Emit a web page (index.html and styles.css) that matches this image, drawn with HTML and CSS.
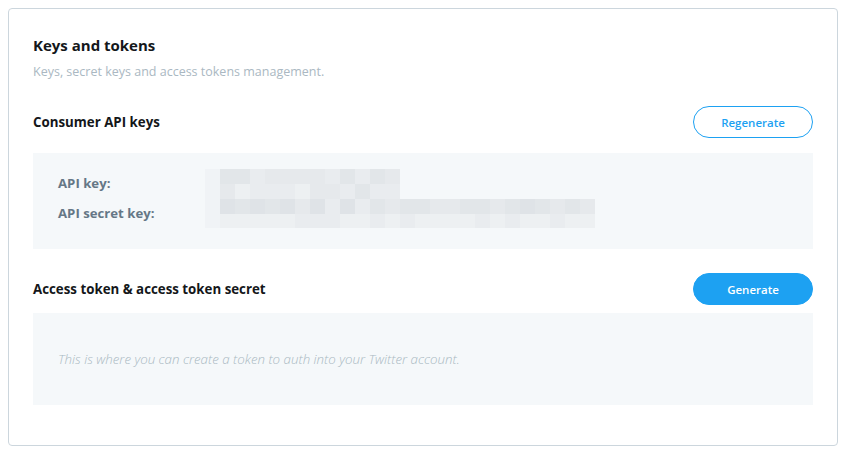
FILE: index.html
```html
<!DOCTYPE html>
<html lang="en">
<head>
<meta charset="utf-8">
<title>Keys and tokens</title>
<link rel="stylesheet" href="styles.css">
</head>
<body>
<div class="card">
  <h1 class="title">Keys and tokens</h1>
  <p class="subtitle">Keys, secret keys and access tokens management.</p>

  <div class="section-head">
    <h2 class="section-title">Consumer API keys</h2>
    <button class="btn btn-outline">Regenerate</button>
  </div>
  <div class="panel keys">
    <div class="key-label">API key:</div>
    <div class="blur">
      <div class="blur-row"><i class="f"></i><i class="b"></i><i class="b"></i><i class="d"></i><i class="c"></i><i class="c"></i><i class="c"></i><i class="c"></i><i class="d"></i><i class="b"></i><i class="d"></i><i class="b"></i><i class="c"></i></div>
      <div class="blur-row"><i class="f"></i><i class="c"></i><i class="e"></i><i class="d"></i><i class="d"></i><i class="d"></i><i class="e"></i><i class="c"></i><i class="c"></i><i class="d"></i><i class="b"></i><i class="d"></i><i class="d"></i></div>
    </div>
    <div class="key-label">API secret key:</div>
    <div class="blur">
      <div class="blur-row"><i class="f"></i><i class="a"></i><i class="b"></i><i class="a"></i><i class="b"></i><i class="a"></i><i class="c"></i><i class="a"></i><i class="d"></i><i class="a"></i><i class="d"></i><i class="b"></i><i class="c"></i><i class="b"></i><i class="b"></i><i class="c"></i><i class="c"></i><i class="b"></i><i class="b"></i><i class="c"></i><i class="b"></i><i class="a"></i><i class="b"></i><i class="c"></i><i class="b"></i><i class="c"></i></div>
      <div class="blur-row short"><i class="f"></i><i class="e"></i><i class="e"></i><i class="e"></i><i class="e"></i><i class="e"></i><i class="d"></i><i class="d"></i><i class="d"></i><i class="e"></i><i class="e"></i><i class="d"></i><i class="e"></i><i class="d"></i><i class="e"></i><i class="e"></i><i class="e"></i><i class="e"></i><i class="d"></i><i class="e"></i><i class="d"></i><i class="e"></i><i class="e"></i><i class="d"></i><i class="e"></i><i class="e"></i></div>
    </div>
  </div>

  <div class="section-head second">
    <h2 class="section-title">Access token &amp; access token secret</h2>
    <button class="btn btn-fill">Generate</button>
  </div>
  <div class="panel empty">
    <p class="hint">This is where you can create a token to auth into your Twitter account.</p>
  </div>
</div>
</body>
</html>
```

FILE: styles.css
```css
* { box-sizing: border-box; }

html, body { overflow: hidden; }

body {
  margin: 8px 0 0 8px;
  background: #ffffff;
  font-family: "Open Sans", "Noto Sans", "Liberation Sans", sans-serif;
}

.card {
  width: 830px;
  height: 438px;
  border: 1px solid #ccd6dd;
  border-radius: 4px;
  padding: 26px 24px 0 24px;
}

.title {
  margin: 0;
  font-size: 15px;
  line-height: 20px;
  font-weight: 700;
  color: #14171a;
}

.subtitle {
  margin: 7px 0 0 0;
  font-size: 12.5px;
  line-height: 20px;
  color: #aab8c2;
}

.section-head {
  margin-top: 24px;
  height: 32px;
  display: flex;
  align-items: center;
  justify-content: space-between;
}

.section-head.second {
  margin-top: 24px;
}

.section-title {
  margin: 0;
  font-size: 13.3px;
  font-weight: 700;
  color: #14171a;
}

.btn {
  width: 120px;
  height: 32px;
  border-radius: 16px;
  font-family: inherit;
  font-size: 11.5px;
  font-weight: 600;
  padding: 0;
  cursor: pointer;
}

.btn-outline {
  background: #ffffff;
  border: 1px solid #1da1f2;
  color: #1da1f2;
}

.btn-fill {
  background: #1da1f2;
  border: 1px solid #1da1f2;
  color: #ffffff;
}

.panel {
  background: #f5f8fa;
}

.keys {
  margin-top: 15px;
  height: 96px;
  padding: 16px 0 0 25px;
  display: grid;
  grid-template-columns: 147px auto;
  grid-template-rows: 30px 29px;
  align-items: center;
}

.key-label {
  font-size: 13.2px;
  font-weight: 700;
  color: #657786;
  line-height: 18px;
  margin-top: -2px;
}

.blur {
  display: flex;
  flex-direction: column;
}

.blur-row {
  display: flex;
  height: 15px;
}

.blur-row.short { height: 14px; }

.blur-row i {
  display: block;
  width: 15px;
  height: 100%;
}

.blur-row i.a { background: #dfe3e7; }
.blur-row i.b { background: #e2e6e9; }
.blur-row i.c { background: #e6e9ec; }
.blur-row i.d { background: #e9ecef; }
.blur-row i.e { background: #edf0f2; }
.blur-row i.f { background: #f0f3f6; }

.empty {
  margin-top: 8px;
  height: 92px;
  display: flex;
  align-items: center;
  padding-left: 25px;
}

.hint {
  margin: 0;
  font-size: 13.3px;
  font-style: italic;
  font-weight: 300;
  color: #aab8c2;
}
```
